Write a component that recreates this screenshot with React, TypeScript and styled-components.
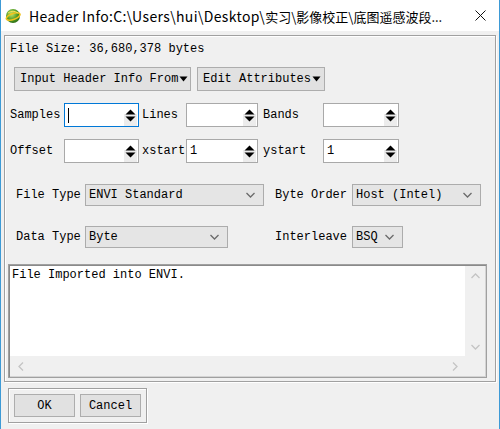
import React from "react";
import styled, { createGlobalStyle } from "styled-components";

const Global = createGlobalStyle`
  html, body { margin: 0; padding: 0; background: #f0f0f0; }
  * { box-sizing: border-box; }
`;

const Window = styled.div`
  width: 500px;
  height: 429px;
  overflow: hidden;
  background: #f0f0f0;
  border-left: 1px solid #3d9ad6;
  border-right: 1px solid #3d9ad6;
  display: flex;
  flex-direction: column;
  font-family: "Liberation Mono", "DejaVu Sans Mono", monospace;
  font-size: 12px;
  color: #000;
`;

const TitleBar = styled.div`
  height: 31px;
  flex-shrink: 0;
  background: #fff;
  display: flex;
  align-items: center;
  padding-left: 4px;
  padding-right: 13px;
`;

const TitleText = styled.span`
  margin-left: 8px;
  font-family: "Noto Sans CJK SC", "Liberation Sans", sans-serif;
  font-size: 14px;
  letter-spacing: 0.35px;
  white-space: nowrap;
  color: #000;
`;

const TitleCjk = styled.span`
  font-size: 13px;
  letter-spacing: 0;
`;

const CloseBox = styled.div`
  margin-left: auto;
  width: 11px;
  height: 11px;
  display: flex;
`;

const Frame = styled.div`
  margin: 4px 3px 0 3px;
  height: 347px;
  flex-shrink: 0;
  border: 1px solid #a0a0a0;
  box-shadow: inset 1px 1px 0 #fff, 1px 1px 0 #fff;
  display: flex;
  flex-direction: column;
`;

const FileSize = styled.div`
  margin: 5px 0 0 5px;
  height: 16px;
  line-height: 16px;
  white-space: nowrap;
`;

const ButtonRow = styled.div`
  margin: 10px 0 0 9px;
  display: flex;
  gap: 6px;
`;

const MenuButton = styled.div<{ $w: number }>`
  width: ${(p) => p.$w}px;
  height: 24px;
  background: #e1e1e1;
  border: 1px solid #adadad;
  display: flex;
  align-items: center;
  padding-left: 5px;
  white-space: nowrap;
`;

const FieldRow = styled.div`
  margin: 12px 0 0 5px;
  height: 24px;
  display: flex;
  align-items: center;
`;

const FieldLabel = styled.span<{ $w: number; $ml?: number }>`
  width: ${(p) => p.$w}px;
  margin-left: ${(p) => p.$ml ?? 0}px;
  white-space: nowrap;
  flex-shrink: 0;
`;

const Spin = styled.div<{ $w: number; $focus?: boolean }>`
  width: ${(p) => p.$w}px;
  height: 24px;
  flex-shrink: 0;
  background: #fff;
  border: 1px solid ${(p) => (p.$focus ? "#0078d7" : "#a9a9a9")};
  display: flex;
  align-items: center;
  padding-left: 3px;
  padding-right: 1px;
`;

const SpinValue = styled.span`
  flex: 1;
  white-space: nowrap;
  display: flex;
  align-items: center;
`;

const Caret = styled.span`
  display: inline-block;
  width: 1px;
  height: 15px;
  background: #000;
`;

const SpinButtons = styled.div`
  width: 13px;
  height: 22px;
  display: flex;
  align-items: center;
  justify-content: center;
  background: linear-gradient(#fff 0 45%, #ececec 45% 100%);
`;

const SelectRow = styled.div<{ $mt: number }>`
  margin: ${(p) => p.$mt}px 0 0 11px;
  height: 22px;
  display: flex;
  align-items: center;
`;

const Select = styled.div<{ $w: number }>`
  width: ${(p) => p.$w}px;
  height: 22px;
  flex-shrink: 0;
  background: #e5e5e5;
  border: 1px solid #acacac;
  display: flex;
  align-items: center;
  padding-left: 3px;
  padding-right: 8px;
  white-space: nowrap;
`;

const SelectText = styled.span`
  flex: 1;
`;

const TextBox = styled.div`
  margin: 16px 0 0 3px;
  width: 479px;
  height: 114px;
  border: 1px solid #a0a0a0;
  box-shadow: inset 1px 1px 0 #8a8a8a, inset -1px -1px 0 #d4d4d4;
  padding: 1px;
  display: grid;
  grid-template-columns: 455px 20px;
  grid-template-rows: 90px 20px;
`;

const TextContent = styled.div`
  background: #fff;
  padding: 1px 2px;
  line-height: 16px;
  white-space: nowrap;
`;

const VScroll = styled.div`
  background: #f0f0f0;
  display: flex;
  flex-direction: column;
  justify-content: space-between;
  align-items: center;
  padding: 7px 0 6px;
`;

const HScroll = styled.div`
  background: #f0f0f0;
  display: flex;
  justify-content: space-between;
  align-items: center;
  padding: 0 7px 0 8px;
`;

const Corner = styled.div`
  background: #f0f0f0;
`;

const ButtonPanel = styled.div`
  margin: 6px 0 0 7px;
  width: 139px;
  height: 35px;
  flex-shrink: 0;
  border: 1px solid #a0a0a0;
  box-shadow: inset 1px 1px 0 #fff, 1px 1px 0 #fff;
  padding: 5px;
  display: flex;
  gap: 5px;
`;

const PushButton = styled.div`
  width: 61px;
  height: 23px;
  background: #e1e1e1;
  border: 1px solid #adadad;
  display: flex;
  align-items: center;
  justify-content: center;
`;

const EnviIcon = () => (
  <svg width="16" height="16" viewBox="0 0 16 16">
    <defs>
      <radialGradient id="g" cx="40%" cy="35%" r="70%">
        <stop offset="0%" stopColor="#c8e86a" />
        <stop offset="60%" stopColor="#4f9a25" />
        <stop offset="100%" stopColor="#2c6a14" />
      </radialGradient>
    </defs>
    <circle cx="8" cy="8" r="7" fill="url(#g)" />
    <ellipse cx="8" cy="8.5" rx="7.2" ry="3" fill="none" stroke="#f2c21b" strokeWidth="1.6" transform="rotate(-20 8 8)" />
    <path d="M3 5 Q8 1.5 13 5" fill="none" stroke="#f6e05a" strokeWidth="1" />
  </svg>
);

const CloseIcon = () => (
  <svg width="11" height="11" viewBox="0 0 11 11">
    <path d="M0.5 0.5 L10.5 10.5 M10.5 0.5 L0.5 10.5" stroke="#111" strokeWidth="1" />
  </svg>
);

const DropTri = () => (
  <svg width="9" height="6" viewBox="0 0 9 6" style={{ marginLeft: 1 }}>
    <path d="M0.5 0.5 H8.5 L4.5 5.5 Z" fill="#000" />
  </svg>
);

const SpinArrows = () => (
  <svg width="11" height="13" viewBox="0 0 11 13">
    <path d="M5.5 0.5 L10.5 5.5 H0.5 Z" fill="#000" />
    <path d="M0.5 7.5 H10.5 L5.5 12.5 Z" fill="#000" />
  </svg>
);

const Chevron = ({ dir, color = "#c4c4c4" }: { dir: "up" | "down" | "left" | "right" | "sel"; color?: string }) => {
  const paths: Record<string, string> = {
    up: "M0.5 5 L4.5 1 L8.5 5",
    down: "M0.5 1 L4.5 5 L8.5 1",
    left: "M5 0.5 L1 4.5 L5 8.5",
    right: "M1 0.5 L5 4.5 L1 8.5",
    sel: "M0.5 1 L4.5 5 L8.5 1",
  };
  const vertical = dir === "left" || dir === "right";
  return (
    <svg width={vertical ? 6 : 9} height={vertical ? 9 : 6} viewBox={vertical ? "0 0 6 9" : "0 0 9 6"}>
      <path d={paths[dir]} fill="none" stroke={color} strokeWidth="1.3" />
    </svg>
  );
};

type SpinProps = { w: number; value?: string; focus?: boolean };
const SpinBox = ({ w, value = "", focus }: SpinProps) => (
  <Spin $w={w} $focus={focus}>
    <SpinValue>{focus ? <Caret /> : value}</SpinValue>
    <SpinButtons>
      <SpinArrows />
    </SpinButtons>
  </Spin>
);

const Dropdown = ({ w, value }: { w: number; value: string }) => (
  <Select $w={w}>
    <SelectText>{value}</SelectText>
    <Chevron dir="sel" color="#6a6a6a" />
  </Select>
);

export default function App() {
  return (
    <>
      <Global />
      <Window>
        <TitleBar>
          <EnviIcon />
          <TitleText>
            Header Info:C:\Users\hui\Desktop\<TitleCjk>实习\影像校正\底图遥感波段...</TitleCjk>
          </TitleText>
          <CloseBox>
            <CloseIcon />
          </CloseBox>
        </TitleBar>
        <Frame>
          <FileSize>File Size: 36,680,378 bytes</FileSize>
          <ButtonRow>
            <MenuButton $w={177}>
              Input Header Info From
              <DropTri />
            </MenuButton>
            <MenuButton $w={128}>
              Edit Attributes
              <DropTri />
            </MenuButton>
          </ButtonRow>
          <FieldRow>
            <FieldLabel $w={54}>Samples</FieldLabel>
            <SpinBox w={75} focus />
            <FieldLabel $w={44} $ml={3}>Lines</FieldLabel>
            <SpinBox w={72} />
            <FieldLabel $w={60} $ml={5}>Bands</FieldLabel>
            <SpinBox w={76} />
          </FieldRow>
          <FieldRow>
            <FieldLabel $w={54}>Offset</FieldLabel>
            <SpinBox w={75} />
            <FieldLabel $w={44} $ml={3}>xstart</FieldLabel>
            <SpinBox w={72} value="1" />
            <FieldLabel $w={60} $ml={5}>ystart</FieldLabel>
            <SpinBox w={76} value="1" />
          </FieldRow>
          <SelectRow $mt={21}>
            <FieldLabel $w={69}>File Type</FieldLabel>
            <Dropdown w={179} value="ENVI Standard" />
            <FieldLabel $w={77} $ml={11}>Byte Order</FieldLabel>
            <Dropdown w={129} value="Host (Intel)" />
          </SelectRow>
          <SelectRow $mt={20}>
            <FieldLabel $w={69}>Data Type</FieldLabel>
            <Dropdown w={143} value="Byte" />
            <FieldLabel $w={77} $ml={47}>Interleave</FieldLabel>
            <Dropdown w={51} value="BSQ" />
          </SelectRow>
          <TextBox>
            <TextContent>File Imported into ENVI.</TextContent>
            <VScroll>
              <Chevron dir="up" />
              <Chevron dir="down" />
            </VScroll>
            <HScroll>
              <Chevron dir="left" />
              <Chevron dir="right" />
            </HScroll>
            <Corner />
          </TextBox>
        </Frame>
        <ButtonPanel>
          <PushButton>OK</PushButton>
          <PushButton>Cancel</PushButton>
        </ButtonPanel>
      </Window>
    </>
  );
}
